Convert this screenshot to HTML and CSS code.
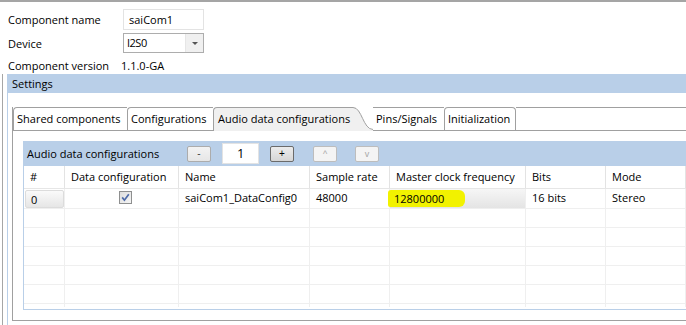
FILE: index.html
```html
<!DOCTYPE html>
<html lang="en">
<head>
  <meta charset="UTF-8" />
  <title>saiCom1 - Component settings</title>
  <link rel="stylesheet" href="styles.css">
</head>
<body>

  <!-- Component properties -->
  <div class="form">
    <div class="field">
      <span class="label">Component name</span>
      <div class="textbox">saiCom1</div>
    </div>
    <div class="field field-device">
      <span class="label">Device</span>
      <div class="combo">
        <span class="combo-value">I2S0</span>
        <span class="combo-arrow"></span>
      </div>
    </div>
    <div class="field field-version">
      <span class="label-version">Component version</span>
      <span>1.1.0-GA</span>
    </div>
  </div>

  <!-- Settings section -->
  <div class="settings">
    <div class="section">
      <div class="section-title">Settings</div>
      <div class="section-body">
        <div class="tabfolder">
          <div class="tabs">
            <div class="tab tab-shared">Shared components</div>
            <div class="tab tab-config">Configurations</div>
            <div class="tab-active">
              <div class="tab-active-label">Audio data configurations</div>
              <svg class="tab-curve" width="20" height="24" viewBox="0 0 20 24">
                <path d="M0 0 C9 0 10 23 20 23 L20 24 L0 24 Z" fill="#f0f0f0" />
                <path d="M0 0.5 C9 0.5 10 22.5 20 22.5" fill="none" stroke="#a0a0a0" />
              </svg>
            </div>
            <div class="tab tab-pins">Pins/Signals</div>
            <div class="tab tab-init">Initialization</div>
            <div class="tab-fill"></div>
          </div>

          <div class="tab-content">
            <div class="group">
              <div class="group-head">
                <span class="group-title">Audio data configurations</span>
                <button class="btn btn-minus">-</button>
                <div class="spin">1</div>
                <button class="btn btn-focus">+</button>
                <button class="btn btn-up" disabled>^</button>
                <button class="btn btn-down" disabled>v</button>
              </div>

              <div class="grid">
                <div class="row row-head">
                  <div class="cell">#</div>
                  <div class="cell">Data configuration</div>
                  <div class="cell">Name</div>
                  <div class="cell">Sample rate</div>
                  <div class="cell">Master clock frequency</div>
                  <div class="cell">Bits</div>
                  <div class="cell">Mode</div>
                </div>
                <div class="row row-first">
                  <div class="cell cell-index"><span class="index-box">0</span></div>
                  <div class="cell cell-check">
                    <svg width="13" height="13" viewBox="0 0 13 13">
                      <defs>
                        <linearGradient id="chk" x1="0" y1="0" x2="1" y2="1">
                          <stop offset="0" stop-color="#dcdcdc" />
                          <stop offset="1" stop-color="#f6f6f6" />
                        </linearGradient>
                      </defs>
                      <rect x="0.5" y="0.5" width="12" height="12" fill="url(#chk)" stroke="#8e8f8f" />
                      <path d="M3.2 6.4 L5.4 9.2 L9.8 3.2" fill="none" stroke="#4d6aa8" stroke-width="1.7" />
                    </svg>
                  </div>
                  <div class="cell">saiCom1_DataConfig0</div>
                  <div class="cell">48000</div>
                  <div class="cell cell-clock"><span class="highlight">12800000</span></div>
                  <div class="cell">16 bits</div>
                  <div class="cell">Stereo</div>
                </div>
                <div class="row"><div class="cell"></div><div class="cell"></div><div class="cell"></div><div class="cell"></div><div class="cell"></div><div class="cell"></div><div class="cell"></div></div>
                <div class="row"><div class="cell"></div><div class="cell"></div><div class="cell"></div><div class="cell"></div><div class="cell"></div><div class="cell"></div><div class="cell"></div></div>
                <div class="row"><div class="cell"></div><div class="cell"></div><div class="cell"></div><div class="cell"></div><div class="cell"></div><div class="cell"></div><div class="cell"></div></div>
                <div class="row"><div class="cell"></div><div class="cell"></div><div class="cell"></div><div class="cell"></div><div class="cell"></div><div class="cell"></div><div class="cell"></div></div>
                <div class="row"><div class="cell"></div><div class="cell"></div><div class="cell"></div><div class="cell"></div><div class="cell"></div><div class="cell"></div><div class="cell"></div></div>
                <div class="row"><div class="cell"></div><div class="cell"></div><div class="cell"></div><div class="cell"></div><div class="cell"></div><div class="cell"></div><div class="cell"></div></div>
              </div>
            </div>
          </div>
        </div>
      </div>
    </div>
  </div>

</body>
</html>
```

FILE: styles.css
```css
* { box-sizing: border-box; margin: 0; padding: 0; }
html, body {
  width: 686px;
  height: 325px;
  overflow: hidden;
  background: #fff;
  font-family: 'Open Sans', sans-serif;
  font-size: 11px;
  color: #000;
}

body {
  border-top: 2px solid #a5a5a5;
}

/* TOP FORM */
.form {
  padding: 7px 0 0 8px;
}

.field {
  display: flex;
  align-items: center;
  height: 21px;
}

.field-device {
  margin-top: 3px;
  height: 20px;
}

.field-version {
  margin-top: 3px;
  height: 18px;
}

.label {
  width: 115px;
}

.label-version {
  width: 113px;
}

.textbox {
  width: 81px;
  height: 21px;
  border: 1px solid #e3e3e3;
  padding-left: 5px;
  line-height: 19px;
}

.combo {
  display: flex;
  width: 81px;
  height: 20px;
  border: 1px solid #adadad;
}

.combo-value {
  flex: 1;
  padding-left: 3px;
  line-height: 18px;
  letter-spacing: -0.5px;
}

.combo-arrow {
  width: 18px;
  background: #f0f0f0;
  border-left: 1px solid #e6e6e6;
  display: flex;
  align-items: center;
  justify-content: center;
}

.combo-arrow::after {
  content: "";
  border-left: 3px solid transparent;
  border-right: 3px solid transparent;
  border-top: 3px solid #555;
}

/* SETTINGS */
.settings {
  margin-left: 2px;
  border-left: 1px solid #a6a6a6;
  padding-left: 4px;
  height: 260px;
}

.section {
  border-left: 1px solid #b9cfe8;
  height: 100%;
}

.section-title {
  height: 19px;
  line-height: 19px;
  padding-left: 4px;
  background: #b9cfe8;
}

.section-body {
  padding: 14px 0 0 4px;
}

/* TAB FOLDER */
.tabfolder {
  border-left: 1px solid #a0a0a0;
  border-bottom: 1px solid #a0a0a0;
  width: 700px;
}

.tabs {
  display: flex;
  height: 24px;
  border-bottom: 1px solid #a0a0a0;
}

.tab {
  height: 23px;
  line-height: 21px;
  padding-left: 3px;
  border-top: 1px solid #a0a0a0;
  border-left: 1px solid #a0a0a0;
  border-top-left-radius: 4px;
  white-space: nowrap;
  background: #fff;
}

.tab-shared { width: 114px; }
.tab-config { width: 86px; }
.tab-pins { width: 71px; border-left: none; border-top-left-radius: 0; }
.tab-init {
  width: 72px;
  border-right: 1px solid #a0a0a0;
  border-top-right-radius: 4px;
}

.tab-active {
  display: flex;
  height: 24px;
  margin-bottom: -1px;
}

.tab-active-label {
  width: 140px;
  padding-left: 4px;
  line-height: 21px;
  white-space: nowrap;
  background: #f0f0f0;
  border-top: 1px solid #a0a0a0;
  border-left: 1px solid #a0a0a0;
  border-top-left-radius: 4px;
}

.tab-curve {
  display: block;
  background: #fff;
}

.tab-fill {
  flex: 1;
  border-top: 1px solid #a0a0a0;
}

.tab-content {
  padding: 10px 0 10px 10px;
}

/* GROUP */
.group {
  border-left: 1px solid #b9cfe8;
  border-bottom: 1px solid #b9cfe8;
  padding-bottom: 2px;
}

.group-head {
  display: flex;
  align-items: center;
  height: 25px;
  background: #b9cfe8;
}

.group-title {
  width: 163px;
  padding-left: 3px;
}

.btn {
  width: 24px;
  height: 16px;
  border: 1px solid #acacac;
  border-radius: 2px;
  background: linear-gradient(#f3f3f3, #e6e6e6);
  font-family: 'Liberation Sans', sans-serif;
  font-size: 10px;
  color: #444;
  line-height: 14px;
}

.btn-minus { margin-right: 11px; }
.btn-focus {
  margin-right: 19px;
  border-color: #6b6b6b;
  background: linear-gradient(#ececec, #d6d6d6);
  color: #000;
}
.btn-up { margin-right: 18px; }
.btn:disabled {
  border-color: #bdbdbd;
  background: #f4f4f4;
  color: #a8a8a8;
  font-size: 9px;
}

.spin {
  width: 37px;
  height: 21px;
  margin-right: 11px;
  background: #fff;
  border: 1px solid #e3e3e3;
  padding-left: 14px;
  line-height: 19px;
  font-size: 13px;
}

/* GRID */
.grid {
  height: 141px;
  overflow: hidden;
}

.row {
  display: grid;
  grid-template-columns: 41px 114px 131px 80px 136px 80px 80px;
  height: 19px;
  border-bottom: 1px solid #efefef;
}

.row-head {
  height: 23px;
  border-bottom-color: #e6e6e6;
}

.row-first {
  height: 20px;
}

.cell {
  border-right: 1px solid #efefef;
  padding-left: 6px;
  line-height: 18px;
  white-space: nowrap;
  overflow: hidden;
}

.row-head .cell {
  line-height: 22px;
  border-right-color: #e3e3e3;
}

.cell-index {
  padding: 1px 0 0 1px;
}

.index-box {
  display: block;
  height: 18px;
  padding-left: 5px;
  line-height: 17px;
  border: 1px solid #dcdcdc;
  border-radius: 2px;
  background: linear-gradient(#fafafa, #e6e6e6);
}

.cell-check {
  display: flex;
  justify-content: center;
  align-items: center;
  padding: 0 0 2px 7px;
}

.cell-clock {
  padding: 1px 0 0 0;
  background: linear-gradient(#f6f6f6, #e4e4e4);
  overflow: visible;
}

.highlight {
  display: inline-block;
  margin-left: -2px;
  width: 77px;
  height: 17px;
  padding-left: 6px;
  line-height: 17px;
  background: #f2f200;
  border-radius: 3px 6px 6px 2px;
}
```
